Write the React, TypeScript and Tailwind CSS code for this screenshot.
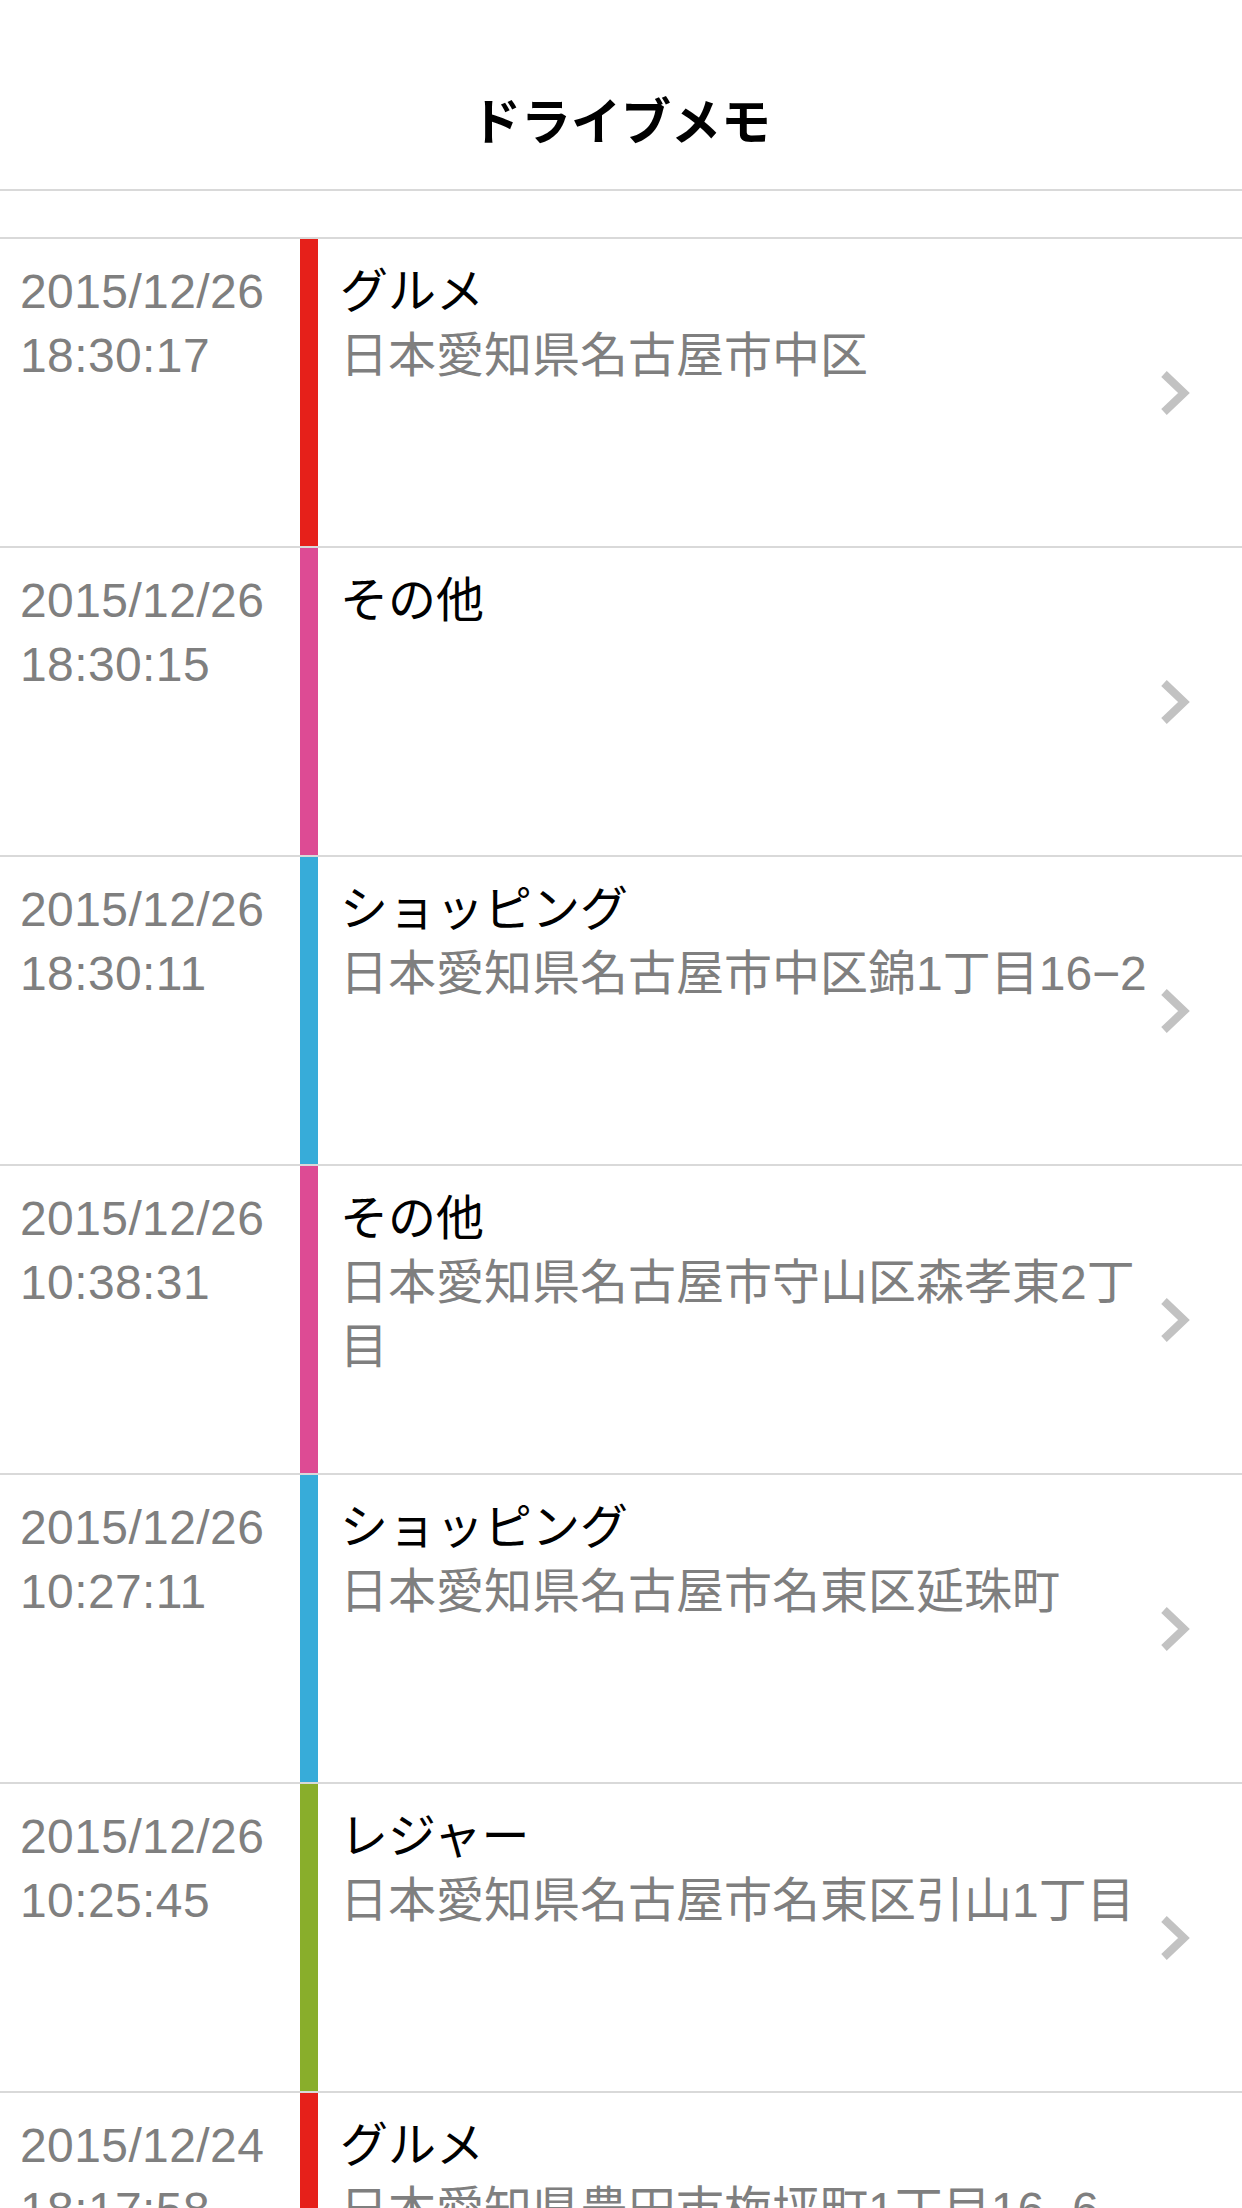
const memos = [
  { date: "2015/12/26", time: "18:30:17", category: "グルメ", address: "日本愛知県名古屋市中区", color: "bg-[#e6201a]" },
  { date: "2015/12/26", time: "18:30:15", category: "その他", address: "", color: "bg-[#dd4b94]" },
  { date: "2015/12/26", time: "18:30:11", category: "ショッピング", address: "日本愛知県名古屋市中区錦1丁目16−2", color: "bg-[#37acd9]" },
  { date: "2015/12/26", time: "10:38:31", category: "その他", address: "日本愛知県名古屋市守山区森孝東2丁目", color: "bg-[#dd4b94]" },
  { date: "2015/12/26", time: "10:27:11", category: "ショッピング", address: "日本愛知県名古屋市名東区延珠町", color: "bg-[#37acd9]" },
  { date: "2015/12/26", time: "10:25:45", category: "レジャー", address: "日本愛知県名古屋市名東区引山1丁目", color: "bg-[#89ae2b]" },
  { date: "2015/12/24", time: "18:17:58", category: "グルメ", address: "日本愛知県豊田市梅坪町1丁目16−6", color: "bg-[#e6201a]" },
];

function Chevron() {
  return (
    <svg width="30" height="46" viewBox="0 0 30 46" fill="none">
      <polyline
        points="4,4 24,23 4,42"
        stroke="#c2c2c2"
        strokeWidth="8"
        strokeLinejoin="miter"
        strokeLinecap="butt"
      />
    </svg>
  );
}

export default function App() {
  return (
    <div className="w-[1242px] bg-white font-[family-name:Liberation_Sans,Noto_Sans_CJK_JP,sans-serif]">
      {/* Nav bar */}
      <div className="h-[191px] pt-[57px] border-b-2 border-[#d9d9d9] flex items-center justify-center">
        <h1 className="text-[50px] font-bold text-black leading-none">ドライブメモ</h1>
      </div>

      <div className="h-[48px] border-b-2 border-[#d9d9d9]" />

      {/* Memo list */}
      <ul>
        {memos.map((m, i) => (
          <li key={i} className="h-[309px] border-b-2 border-[#d9d9d9] flex">
            <div className="w-[300px] pl-[20px] pt-[21px] text-[48px] leading-[64px] tracking-[0.4px] text-[#7f7f7f]">
              <div>{m.date}</div>
              <div>{m.time}</div>
            </div>
            <div className={`w-[18px] ${m.color}`} />
            <div className="flex-1 pl-[22px] pt-[21px] text-[48px] leading-[64px]">
              <div className="text-black">{m.category}</div>
              {m.address && <div className="text-[#7f7f7f]">{m.address}</div>}
            </div>
            <div className="w-[92px] pl-[10px] flex items-center">
              <Chevron />
            </div>
          </li>
        ))}
      </ul>
    </div>
  );
}
